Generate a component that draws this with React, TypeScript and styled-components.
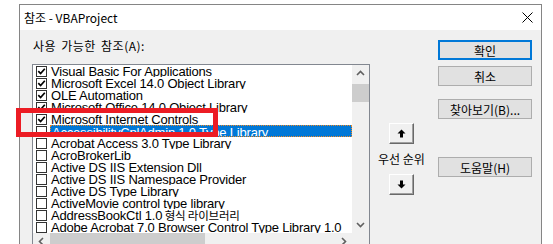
import React from 'react';
import styled, { createGlobalStyle } from 'styled-components';

const GlobalStyle = createGlobalStyle`
  html, body {
    margin: 0;
    padding: 0;
    background: #ffffff;
    overflow: hidden;
  }
`;

const KR = `"Noto Sans CJK KR", "Liberation Sans", sans-serif`;
const LIST_FONT = `"Liberation Sans", "Noto Sans CJK KR", sans-serif`;

const Page = styled.div`
  position: relative;
  width: 553px;
  height: 244px;
  overflow: hidden;
  background: #ffffff;
`;

const Window = styled.div`
  margin: 4px 0 0 19px;
  width: 521px;
  height: 270px;
  border: 1px solid #858585;
  border-bottom: none;
  background: #f0f0f0;
  font-family: ${KR};
  color: #000;
`;

const TitleBar = styled.div`
  height: 25px;
  background: #ffffff;
  display: flex;
  align-items: center;
  justify-content: space-between;
  padding: 0 8px 0 4px;
  font-size: 12px;
`;

const Body = styled.div`
  display: flex;
  padding: 10px 9px 0 12px;
`;

const LeftColumn = styled.div`
  width: 338px;
  display: flex;
  flex-direction: column;
`;

const Caption = styled.div`
  height: 24px;
  padding-left: 1px;
  font-size: 12px;
  line-height: 11px;
  letter-spacing: 0.5px;
  word-spacing: 2px;
`;

const ListBox = styled.div`
  position: relative;
  height: 185px;
  border: 1px solid #828790;
  background: #ffffff;
  display: grid;
  grid-template-columns: 319px 17px;
  grid-template-rows: 168px 17px;
`;

const Rows = styled.div`
  overflow: hidden;
`;

const Row = styled.div`
  height: 12px;
  overflow: hidden;
  display: flex;
  align-items: flex-start;
  padding-left: 3px;
`;

const Box = styled.span`
  flex: none;
  width: 9px;
  height: 9px;
  margin-top: 1px;
  border: 1px solid #333333;
  background: #ffffff;
  display: flex;
  align-items: center;
  justify-content: center;
`;

const ItemText = styled.span<{ $selected?: boolean }>`
  flex: 1;
  margin-left: 3px;
  padding-left: 1px;
  height: 12px;
  box-sizing: border-box;
  font-family: ${LIST_FONT};
  font-size: 13px;
  line-height: 13px;
  letter-spacing: -0.2px;
  white-space: nowrap;
  overflow: hidden;
  color: ${(p) => (p.$selected ? '#ffffff' : '#000000')};
  background: ${(p) => (p.$selected ? '#0078d7' : 'transparent')};
  border: ${(p) => (p.$selected ? '1px dotted #f08a24' : 'none')};
`;

const Hangul = styled.span`
  font-family: "Noto Sans CJK KR", sans-serif;
  font-size: 11.5px;
`;

const VScroll = styled.div`
  background: #f0f0f0;
  display: flex;
  flex-direction: column;
`;

const HScroll = styled.div`
  background: #f0f0f0;
  display: flex;
`;

const Corner = styled.div`
  background: #f0f0f0;
`;

const ArrowCell = styled.div`
  flex: none;
  width: 17px;
  height: 17px;
  display: flex;
  align-items: center;
  justify-content: center;
`;

const VThumb = styled.div`
  height: 18px;
  margin-top: 2px;
  background: #cdcdcd;
`;

const Track = styled.div`
  flex: 1;
`;

const HThumb = styled.div`
  width: 155px;
  background: #cdcdcd;
`;

const MiddleColumn = styled.div`
  width: 63px;
  padding-top: 83px;
  display: flex;
  flex-direction: column;
  align-items: center;
`;

const MoveButton = styled.div`
  width: 25px;
  height: 21px;
  box-sizing: border-box;
  background: #f0f0f0;
  border-top: 1px solid #ffffff;
  border-left: 1px solid #ffffff;
  border-right: 1px solid #696969;
  border-bottom: 1px solid #696969;
  box-shadow: inset -1px -1px 0 #a0a0a0;
  display: flex;
  align-items: center;
  justify-content: center;
`;

const PriorityLabel = styled.div`
  margin: 8px 0 8px;
  font-size: 12px;
  line-height: 14px;
  white-space: nowrap;
`;

const ButtonColumn = styled.div`
  margin-left: 5px;
  width: 94px;
  display: flex;
  flex-direction: column;
`;

const DialogButton = styled.div<{ $default?: boolean; $gap: number }>`
  margin-top: ${(p) => p.$gap}px;
  height: 20px;
  box-sizing: border-box;
  background: #e1e1e1;
  border: ${(p) => (p.$default ? '2px solid #0078d7' : '1px solid #adadad')};
  font-size: 12px;
  display: flex;
  align-items: center;
  justify-content: center;
  white-space: nowrap;
`;

const Highlight = styled.div`
  position: absolute;
  left: 16px;
  top: 108px;
  width: 202px;
  height: 29px;
  box-sizing: border-box;
  border: 5px solid #ec1c24;
`;

const Check = () => (
  <svg width="9" height="9" viewBox="0 0 9 9">
    <path d="M1.3 4.2 L3.6 6.6 L7.8 1.8" fill="none" stroke="#000" strokeWidth="1.7" />
  </svg>
);

const Chevron = ({ dir }: { dir: 'up' | 'down' | 'left' | 'right' }) => {
  const d = {
    up: 'M1 6 L4.5 2.5 L8 6',
    down: 'M1 3 L4.5 6.5 L8 3',
    left: 'M6 1 L2.5 4.5 L6 8',
    right: 'M3 1 L6.5 4.5 L3 8',
  }[dir];
  return (
    <svg width="9" height="9" viewBox="0 0 9 9">
      <path d={d} fill="none" stroke="#606060" strokeWidth="1.6" />
    </svg>
  );
};

const BoldArrow = ({ down }: { down?: boolean }) => (
  <svg width="9" height="9" viewBox="0 0 9 9" style={down ? { transform: 'rotate(180deg)' } : undefined}>
    <polygon points="4.5,0.5 8.5,4.5 0.5,4.5" fill="#000" />
    <rect x="3" y="4" width="3" height="4.5" fill="#000" />
  </svg>
);

const CloseIcon = () => (
  <svg width="11" height="11" viewBox="0 0 11 11">
    <path d="M0.5 0.5 L10.5 10.5 M10.5 0.5 L0.5 10.5" stroke="#000" strokeWidth="1" />
  </svg>
);

// the list font has no hangul, so hangul runs get their own, narrower span
const renderName = (name: string) =>
  name.split(/([\uac00-\ud7a3 ]*[\uac00-\ud7a3]+)/).map((part, i) =>
    /[\uac00-\ud7a3]/.test(part) ? <Hangul key={i}>{part}</Hangul> : part
  );

const references = [
  { name: 'Visual Basic For Applications', checked: true },
  { name: 'Microsoft Excel 14.0 Object Library', checked: true },
  { name: 'OLE Automation', checked: true },
  { name: 'Microsoft Office 14.0 Object Library', checked: true },
  { name: 'Microsoft Internet Controls', checked: true },
  { name: 'AccessibilityCplAdmin 1.0 Type Library', checked: false, selected: true },
  { name: 'Acrobat Access 3.0 Type Library', checked: false },
  { name: 'AcroBrokerLib', checked: false },
  { name: 'Active DS IIS Extension Dll', checked: false },
  { name: 'Active DS IIS Namespace Provider', checked: false },
  { name: 'Active DS Type Library', checked: false },
  { name: 'ActiveMovie control type library', checked: false },
  { name: 'AddressBookCtl 1.0 형식 라이브러리', checked: false },
  { name: 'Adobe Acrobat 7.0 Browser Control Type Library 1.0', checked: false },
];

export default function App() {
  return (
    <Page>
      <GlobalStyle />
      <Window>
        <TitleBar>
          <span>참조 - VBAProject</span>
          <CloseIcon />
        </TitleBar>
        <Body>
          <LeftColumn>
            <Caption>사용 가능한 참조(A):</Caption>
            <ListBox>
              <Rows>
                {references.map((ref) => (
                  <Row key={ref.name}>
                    <Box>{ref.checked && <Check />}</Box>
                    <ItemText $selected={ref.selected}>{renderName(ref.name)}</ItemText>
                  </Row>
                ))}
              </Rows>
              <VScroll>
                <ArrowCell><Chevron dir="up" /></ArrowCell>
                <VThumb />
                <Track />
                <ArrowCell><Chevron dir="down" /></ArrowCell>
              </VScroll>
              <HScroll>
                <ArrowCell><Chevron dir="left" /></ArrowCell>
                <HThumb />
                <Track />
                <ArrowCell><Chevron dir="right" /></ArrowCell>
              </HScroll>
              <Corner />
            </ListBox>
          </LeftColumn>
          <MiddleColumn>
            <MoveButton><BoldArrow /></MoveButton>
            <PriorityLabel>우선 순위</PriorityLabel>
            <MoveButton><BoldArrow down /></MoveButton>
          </MiddleColumn>
          <ButtonColumn>
            <DialogButton $default $gap={0}>확인</DialogButton>
            <DialogButton $gap={6}>취소</DialogButton>
            <DialogButton $gap={13}>찾아보기(B)...</DialogButton>
            <DialogButton $gap={38}>도움말(H)</DialogButton>
          </ButtonColumn>
        </Body>
      </Window>
      <Highlight />
    </Page>
  );
}
